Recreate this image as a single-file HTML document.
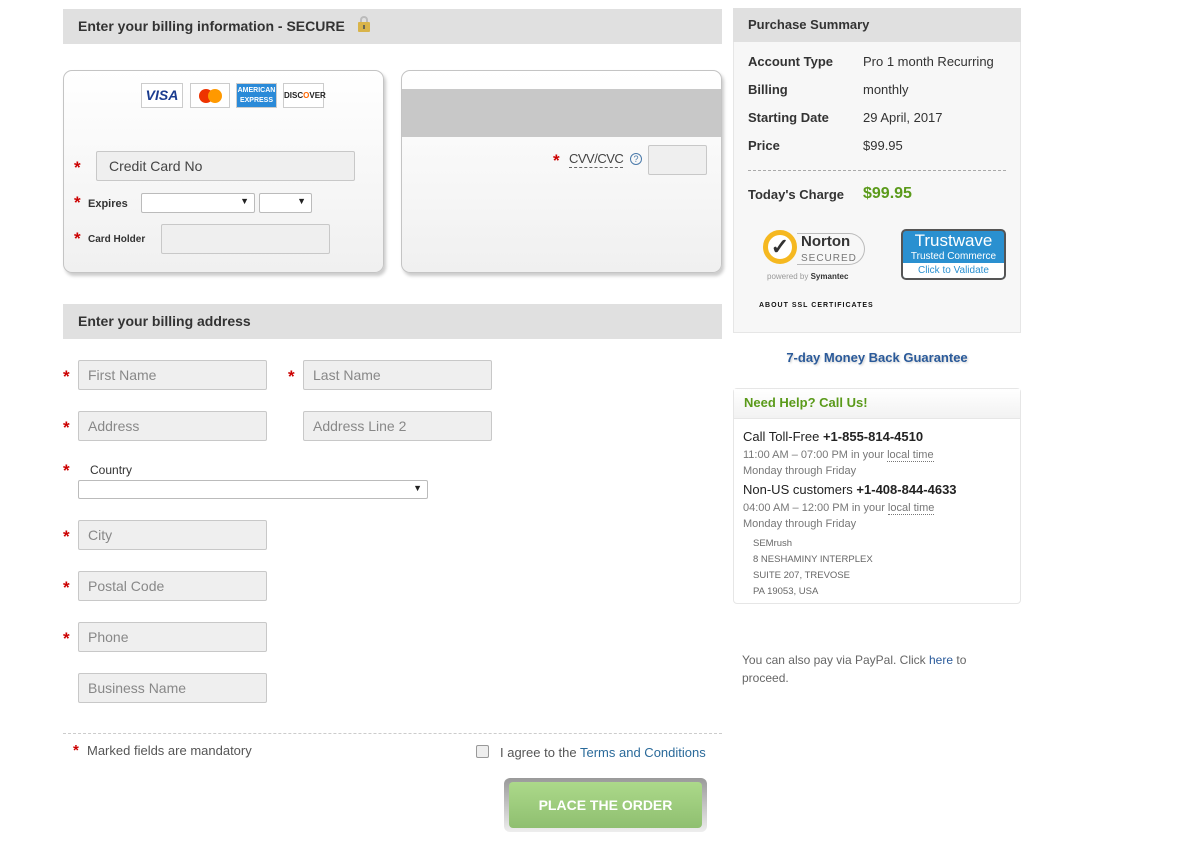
<!DOCTYPE html>
<html><head><meta charset="utf-8"><style>
*{box-sizing:border-box;margin:0;padding:0}
body{width:1200px;height:848px;background:#fff;font-family:"Liberation Sans",Arial,sans-serif;color:#333;position:relative;overflow:hidden}
.a{position:absolute}
.hdr{background:#e0e0e0;font-weight:bold;font-size:14px;color:#333;padding-left:15px;line-height:35px}
.inp{position:absolute;background:#efefef;border:1px solid #c8c8c8;border-radius:2px;font-size:14px;color:#888;padding-left:9px;line-height:28px;height:30px}
.star{position:absolute;color:#c00;font-size:17px;font-weight:bold}
.card{position:absolute;border:1px solid #c4c4c4;border-radius:9px;background:linear-gradient(#fff,#f0f0f0);box-shadow:2px 3px 3px #ccc;overflow:hidden}
.sel{position:absolute;background:#fff;border:1px solid #bbb;border-radius:2px;height:20px}
.sel:after{content:"▼";position:absolute;right:5px;top:2px;font-size:9px;color:#222}
.lbl{position:absolute;font-size:11px;font-weight:bold;color:#333}
.ci{position:absolute;top:83px;height:25px;border:1px solid #ccc;background:#fff;font-weight:bold;text-align:center;line-height:23px}
.row{position:absolute;font-size:13px;left:748px}
.row b{font-weight:bold}
.v{position:absolute;left:863px;font-size:13px}
.sm{font-size:11px;color:#777}
</style></head><body>
<div class="a hdr" style="left:63px;top:9px;width:659px;height:35px">Enter your billing information - SECURE</div>
<div class="a" style="left:360px;top:16px;width:8px;height:8px;border:2px solid #bbb;border-bottom:none;border-radius:4px 4px 0 0"></div>
<div class="a" style="left:358px;top:22px;width:12px;height:10px;background:#d9b44a;border-radius:1px"><div style="width:2px;height:4px;background:#665;margin:3px auto 0"></div></div>

<div class="card" style="left:63px;top:70px;width:321px;height:203px"></div>
<div class="ci" style="left:141px;width:42px;color:#1a3b8f;font-size:14px;font-style:italic">VISA</div>
<div class="ci" style="left:190px;width:40px"><span style="display:inline-block;width:14px;height:14px;border-radius:50%;background:#e30;margin-top:5px"></span><span style="display:inline-block;width:14px;height:14px;border-radius:50%;background:#f90;margin-left:-5px"></span></div>
<div class="ci" style="left:236px;width:41px;background:#2a8ad8;color:#fff;font-size:7px;line-height:10px;padding-top:2px">AMERICAN<br>EXPRESS</div>
<div class="ci" style="left:283px;width:41px;font-size:8px;color:#222">DISC<span style="color:#f60">O</span>VER</div>
<span class="star" style="left:74px;top:158px">*</span>
<div class="inp" style="left:96px;top:151px;width:259px;color:#444;padding-left:12px">Credit Card No</div>
<span class="star" style="left:74px;top:193px">*</span><span class="lbl" style="left:88px;top:198px">Expires</span>
<div class="sel" style="left:141px;top:193px;width:114px"></div>
<div class="sel" style="left:259px;top:193px;width:53px"></div>
<span class="star" style="left:74px;top:229px">*</span><span class="lbl" style="left:88px;top:234px;font-size:10px">Card Holder</span>
<div class="inp" style="left:161px;top:224px;width:169px"></div>

<div class="card" style="left:401px;top:70px;width:321px;height:203px"><div style="position:absolute;top:18px;left:0;right:0;height:48px;background:#c8c8c8"></div></div>
<span class="star" style="left:553px;top:151px">*</span>
<span class="a" style="left:569px;top:151px;font-size:13px;letter-spacing:-0.5px;color:#444;border-bottom:1px dashed #666;line-height:16px">CVV/CVC</span>
<span class="a" style="left:630px;top:153px;width:12px;height:12px;border:1px solid #4a7aaa;border-radius:50%;font-size:9px;color:#4a7aaa;text-align:center;line-height:10px">?</span>
<div class="inp" style="left:648px;top:145px;width:59px"></div>

<div class="a hdr" style="left:63px;top:304px;width:659px;height:35px">Enter your billing address</div>

<span class="star" style="left:63px;top:367px">*</span><div class="inp" style="left:78px;top:360px;width:189px">First Name</div>
<span class="star" style="left:288px;top:367px">*</span><div class="inp" style="left:303px;top:360px;width:189px">Last Name</div>
<span class="star" style="left:63px;top:418px">*</span><div class="inp" style="left:78px;top:411px;width:189px">Address</div>
<div class="inp" style="left:303px;top:411px;width:189px">Address Line 2</div>
<span class="star" style="left:63px;top:461px">*</span><span class="a" style="left:90px;top:463px;font-size:12px">Country</span>
<div class="sel" style="left:78px;top:480px;width:350px;height:19px"></div>
<span class="star" style="left:63px;top:527px">*</span><div class="inp" style="left:78px;top:520px;width:189px">City</div>
<span class="star" style="left:63px;top:578px">*</span><div class="inp" style="left:78px;top:571px;width:189px">Postal Code</div>
<span class="star" style="left:63px;top:629px">*</span><div class="inp" style="left:78px;top:622px;width:189px">Phone</div>
<div class="inp" style="left:78px;top:673px;width:189px">Business Name</div>

<div class="a" style="left:63px;top:733px;width:659px;border-top:1px dashed #ccc"></div>
<span class="a" style="left:73px;top:742px;color:#c00;font-size:15px;font-weight:bold">*</span>
<span class="a" style="left:87px;top:743px;font-size:13px;color:#555">Marked fields are mandatory</span>
<span class="a" style="left:476px;top:745px;width:13px;height:13px;border:1px solid #999;border-radius:2px;background:#eee"></span>
<span class="a" style="left:500px;top:745px;font-size:13px;color:#555">I agree to the <span style="color:#2a6a9a">Terms and Conditions</span></span>
<div class="a" style="left:504px;top:778px;width:203px;height:54px;border-radius:6px;background:linear-gradient(#999,#eee);padding:4px 5px"><div style="height:46px;border-radius:4px;background:linear-gradient(#acd98a,#8fbf70);color:#fff;font-weight:bold;font-size:14px;text-align:center;line-height:46px">PLACE THE ORDER</div></div>

<div class="a" style="left:733px;top:8px;width:288px;height:325px;background:#f7f7f7;border:1px solid #e6e6e6"></div>
<div class="a hdr" style="left:733px;top:8px;width:288px;height:34px;font-size:13px;line-height:34px">Purchase Summary</div>
<div class="row" style="top:54px"><b>Account Type</b></div><div class="v" style="top:54px">Pro 1 month Recurring</div>
<div class="row" style="top:82px"><b>Billing</b></div><div class="v" style="top:82px">monthly</div>
<div class="row" style="top:110px"><b>Starting Date</b></div><div class="v" style="top:110px">29 April, 2017</div>
<div class="row" style="top:138px"><b>Price</b></div><div class="v" style="top:138px">$99.95</div>
<div class="a" style="left:748px;top:170px;width:258px;border-top:1px dashed #aaa"></div>
<div class="row" style="top:187px"><b>Today's Charge</b></div><div class="v" style="top:185px;font-size:16px;font-weight:bold;color:#5a9a1a">$99.95</div>
<div class="a" style="left:763px;top:230px;width:34px;height:34px;border-radius:50%;border:5px solid #f5b820;background:#fff;text-align:center;font-size:22px;line-height:24px;font-weight:bold">✓</div>
<div class="a" style="left:797px;top:233px;width:68px;height:32px;border:1px solid #bbb;border-left:none;border-radius:0 16px 16px 0;font-weight:bold;font-size:15px;line-height:15px;padding-left:4px">Norton<br><span style="font-size:10px;color:#777;font-weight:normal;letter-spacing:1px">SECURED</span></div>
<div class="a" style="left:767px;top:272px;font-size:8px;color:#999">powered by <b style="color:#333">Symantec</b></div>
<div class="a" style="left:901px;top:229px;width:105px;height:51px;border:2px solid #555;border-radius:5px;background:#2a90d0;color:#fff;text-align:center;overflow:hidden"><div style="font-size:17px;line-height:20px">Trustwave</div><div style="font-size:10px;line-height:12px">Trusted Commerce</div><div style="background:#fff;color:#2a90d0;font-size:10px;line-height:15px">Click to Validate</div></div>
<div class="a" style="left:759px;top:302px;font-size:7px;font-weight:bold;letter-spacing:1px;color:#111">ABOUT SSL CERTIFICATES</div>

<div class="a" style="left:733px;top:350px;width:288px;text-align:center;font-size:13px;font-weight:bold;color:#2a5a9a;text-shadow:1px 1px 2px #ccc">7-day Money Back Guarantee</div>

<div class="a" style="left:733px;top:388px;width:288px;height:216px;border:1px solid #e6e6e6;border-radius:4px"></div>
<div class="a" style="left:734px;top:389px;width:286px;height:30px;background:linear-gradient(#fff,#f2f2f2);border-bottom:1px solid #e6e6e6;font-size:13px;font-weight:bold;color:#5a9a1a;padding-left:10px;line-height:28px">Need Help? Call Us!</div>
<div class="a" style="left:743px;top:429px;font-size:13px;line-height:16px;color:#222">Call Toll-Free <b>+1-855-814-4510</b></div>
<div class="a sm" style="left:743px;top:447px;line-height:16px">11:00 AM – 07:00 PM in your <span style="border-bottom:1px dotted #777">local time</span><br>Monday through Friday</div>
<div class="a" style="left:743px;top:482px;font-size:13px;line-height:16px;color:#222">Non-US customers <b>+1-408-844-4633</b></div>
<div class="a sm" style="left:743px;top:500px;line-height:16px">04:00 AM – 12:00 PM in your <span style="border-bottom:1px dotted #777">local time</span><br>Monday through Friday</div>
<div class="a" style="left:753px;top:536px;font-size:9.5px;color:#666;line-height:16px">SEMrush<br>8 NESHAMINY INTERPLEX<br>SUITE 207, TREVOSE<br>PA 19053, USA</div>

<div class="a" style="left:742px;top:651px;font-size:12px;color:#666;line-height:18px">You can also pay via PayPal. Click <span style="color:#2a5a9a">here</span> to<br>proceed.</div>
</body></html>
